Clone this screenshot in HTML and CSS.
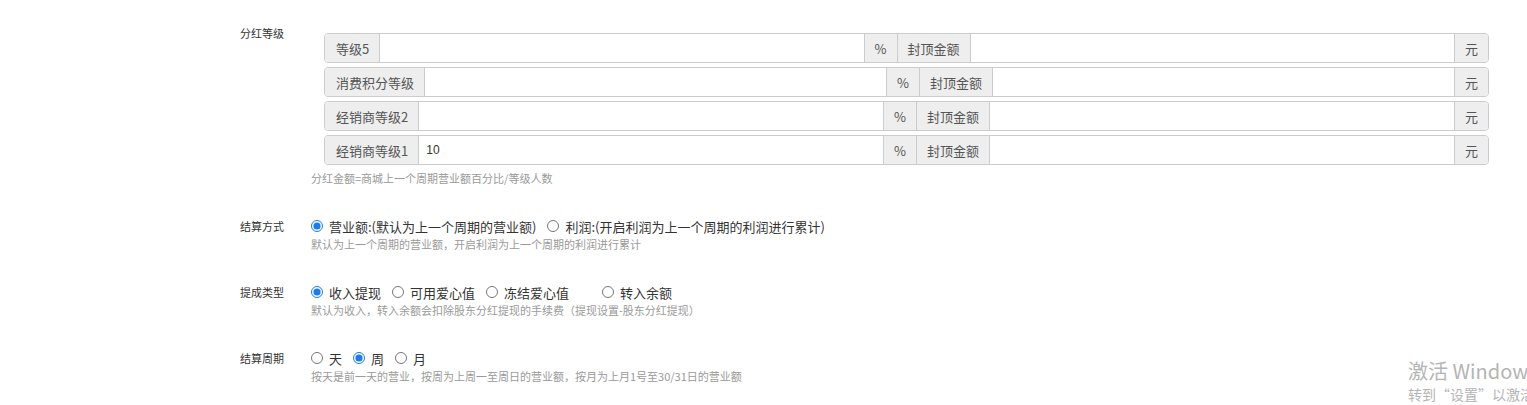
FILE: index.html
```html
<!DOCTYPE html>
<html lang="zh-CN">
<head>
  <meta charset="UTF-8">
  <title>分红设置</title>
  <link rel="stylesheet" href="styles.css">
</head>
<body>
  <div class="form">
    <!-- 分红等级 -->
    <div class="group">
      <div class="group-label">分红等级</div>
      <div class="group-body level-body">
        <div class="input-group">
          <span class="addon">等级5</span>
          <input type="text" class="field" value="">
          <span class="addon">%</span>
          <span class="addon">封顶金额</span>
          <input type="text" class="field" value="">
          <span class="addon">元</span>
        </div>
        <div class="input-group">
          <span class="addon">消费积分等级</span>
          <input type="text" class="field" value="">
          <span class="addon">%</span>
          <span class="addon">封顶金额</span>
          <input type="text" class="field" value="">
          <span class="addon">元</span>
        </div>
        <div class="input-group">
          <span class="addon">经销商等级2</span>
          <input type="text" class="field" value="">
          <span class="addon">%</span>
          <span class="addon">封顶金额</span>
          <input type="text" class="field" value="">
          <span class="addon">元</span>
        </div>
        <div class="input-group">
          <span class="addon">经销商等级1</span>
          <input type="text" class="field" value="10">
          <span class="addon">%</span>
          <span class="addon">封顶金额</span>
          <input type="text" class="field" value="">
          <span class="addon">元</span>
        </div>
      </div>
      <div class="help help-level">分红金额=商城上一个周期营业额百分比/等级人数</div>
    </div>

    <!-- 结算方式 -->
    <div class="group">
      <div class="group-label radio-label">结算方式</div>
      <div class="group-body">
        <div class="radios">
          <label class="radio"><input type="radio" name="settle" checked>营业额:(默认为上一个周期的营业额)</label>
          <label class="radio"><input type="radio" name="settle">利润:(开启利润为上一个周期的利润进行累计)</label>
        </div>
        <div class="help">默认为上一个周期的营业额，开启利润为上一个周期的利润进行累计</div>
      </div>
    </div>

    <!-- 提成类型 -->
    <div class="group">
      <div class="group-label radio-label">提成类型</div>
      <div class="group-body">
        <div class="radios">
          <label class="radio"><input type="radio" name="commission" checked>收入提现</label>
          <label class="radio"><input type="radio" name="commission">可用爱心值</label>
          <label class="radio radio-wide"><input type="radio" name="commission">冻结爱心值</label>
          <label class="radio"><input type="radio" name="commission">转入余额</label>
        </div>
        <div class="help">默认为收入，转入余额会扣除股东分红提现的手续费（提现设置-股东分红提现）</div>
      </div>
    </div>

    <!-- 结算周期 -->
    <div class="group">
      <div class="group-label radio-label">结算周期</div>
      <div class="group-body">
        <div class="radios">
          <label class="radio"><input type="radio" name="period">天</label>
          <label class="radio"><input type="radio" name="period" checked>周</label>
          <label class="radio"><input type="radio" name="period">月</label>
        </div>
        <div class="help">按天是前一天的营业，按周为上周一至周日的营业额，按月为上月1号至30/31日的营业额</div>
      </div>
    </div>
  </div>

  <div class="activate">
    <div class="activate-title">激活 Windows</div>
    <div class="activate-sub">转到“设置”以激活 Windows。</div>
  </div>
</body>
</html>
```

FILE: styles.css
```css
html, body {
  margin: 0;
  padding: 0;
  background: #fff;
  overflow: hidden;
}
body {
  font-family: "Noto Sans CJK SC", "Liberation Sans", sans-serif;
  color: #333;
  width: 1527px;
  height: 405px;
  position: relative;
}
.form {
  padding: 26px 0 0 240px;
  width: 1249px;
}
.group {
  display: grid;
  grid-template-columns: 71px 1178px;
  margin-bottom: 30px;
}
.group-label {
  font-size: 11px;
  line-height: 14px;
  color: #333;
}
.radio-label {
  line-height: 20px;
}
.level-body {
  display: flex;
  flex-direction: column;
  gap: 4px;
  padding: 7px 0 0 13px;
}
.help {
  font-size: 11px;
  line-height: 16px;
  color: #9a9a9a;
}
.help-level {
  grid-column: 2;
  margin-top: 5px;
}
.input-group {
  display: flex;
  height: 30px;
  border: 1px solid #ccc;
  border-radius: 4px;
  box-sizing: border-box;
  overflow: hidden;
}
.addon {
  display: flex;
  align-items: center;
  padding: 0 10px;
  background: #eee;
  color: #555;
  font-size: 13px;
  white-space: nowrap;
  border-left: 1px solid #ccc;
}
.addon:first-child {
  border-left: none;
  padding: 0 10px 0 11px;
}
.field {
  flex: 1;
  min-width: 0;
  border: none;
  border-left: 1px solid #ccc;
  padding: 0 7px;
  margin: 0;
  font-family: "Liberation Sans", sans-serif;
  font-size: 12px;
  color: #333;
  outline: none;
  background: #fff;
}
.radios {
  display: flex;
  height: 20px;
  align-items: center;
}
.radio {
  display: flex;
  align-items: center;
  font-size: 13px;
  color: #333;
  margin-right: 11px;
  white-space: nowrap;
}
.radio input {
  width: 12px;
  height: 12px;
  margin: 0 6px 0 0;
  accent-color: #1a7cf0;
}
.radio-wide {
  margin-right: 33px;
}
.activate {
  position: absolute;
  left: 1408px;
  top: 358px;
  color: #b4b4b4;
  white-space: nowrap;
}
.activate-title {
  font-size: 20px;
  line-height: 26px;
}
.activate-sub {
  font-size: 14px;
  line-height: 20px;
}
```
